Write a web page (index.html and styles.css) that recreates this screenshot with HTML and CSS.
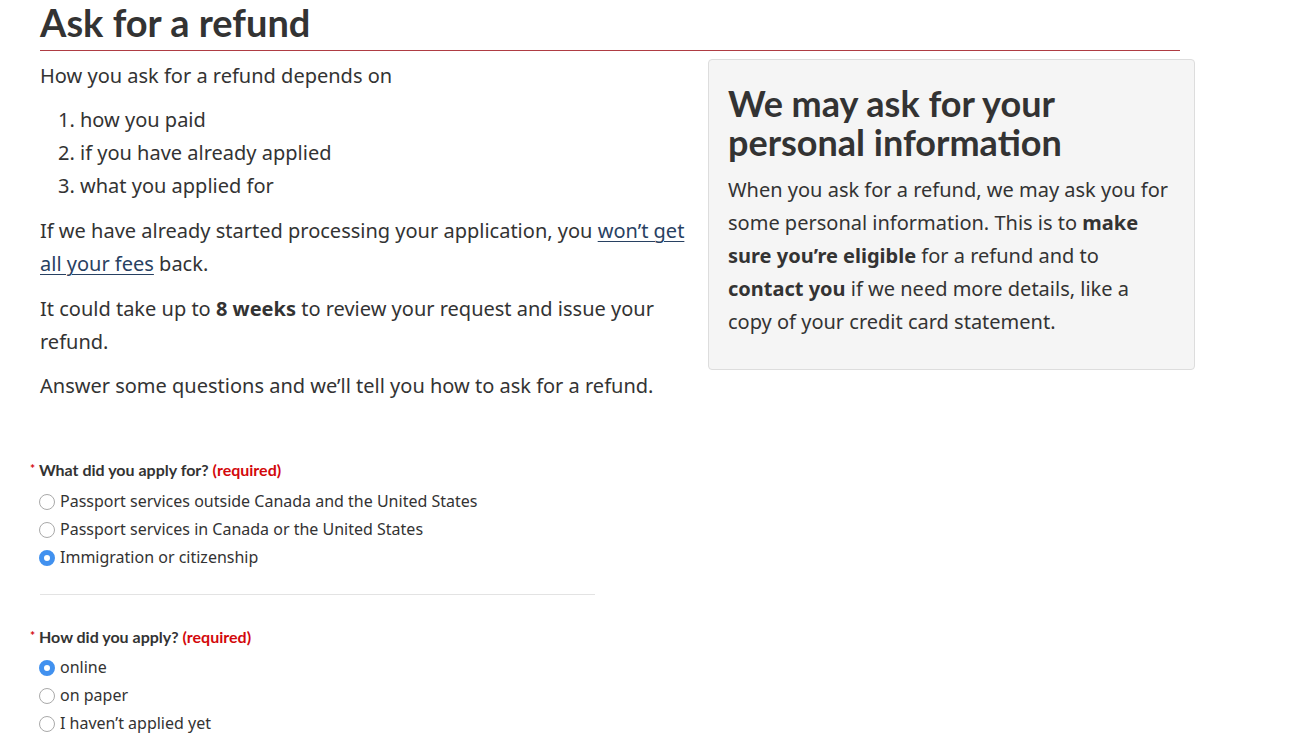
FILE: index.html
```html
<!DOCTYPE html>
<html lang="en">
<head>
<meta charset="utf-8">
<title>Ask for a refund</title>
<link rel="stylesheet" href="styles.css">
</head>
<body>
<main class="page">
  <h1 class="title">Ask for a refund</h1>
  <div class="row">
    <div class="intro">
      <p>How you ask for a refund depends on</p>
      <ol class="steps">
        <li>how you paid</li>
        <li>if you have already applied</li>
        <li>what you applied for</li>
      </ol>
      <p>If we have already started processing your application, you <a href="#">won’t get all your fees</a> back.</p>
      <p>It could take up to <strong>8 weeks</strong> to review your request and issue your refund.</p>
      <p>Answer some questions and we’ll tell you how to ask for a refund.</p>
    </div>
    <aside class="panel">
      <h2 class="panel-title">We may ask for your personal information</h2>
      <p>When you ask for a refund, we may ask you for some personal information. This is to <strong>make sure you’re eligible</strong> for a refund and to <strong>contact you</strong> if we need more details, like a copy of your credit card statement.</p>
    </aside>
  </div>
  <form class="questions">
    <fieldset class="field">
      <legend class="field-label"><span class="star">*</span> What did you apply for? <span class="req">(required)</span></legend>
      <label class="option"><input type="radio" name="what"> Passport services outside Canada and the United States</label>
      <label class="option"><input type="radio" name="what"> Passport services in Canada or the United States</label>
      <label class="option"><input type="radio" name="what" checked> Immigration or citizenship</label>
    </fieldset>
    <hr class="divider">
    <fieldset class="field field-second">
      <legend class="field-label"><span class="star">*</span> How did you apply? <span class="req">(required)</span></legend>
      <label class="option"><input type="radio" name="how" checked> online</label>
      <label class="option"><input type="radio" name="how"> on paper</label>
      <label class="option"><input type="radio" name="how"> I haven’t applied yet</label>
    </fieldset>
  </form>
</main>
</body>
</html>
```

FILE: styles.css
```css
html, body {
  margin: 0;
  padding: 0;
  background: #fff;
}

body {
  font-family: "Noto Sans", "DejaVu Sans", sans-serif;
  color: #333;
  font-size: 20px;
  line-height: 33px;
}

.page {
  padding: 0 40px;
}

.title {
  font-family: Lato, "Liberation Sans", sans-serif;
  font-weight: 700;
  font-size: 38px;
  line-height: 44px;
  margin: 0 0 8px 0;
  padding-bottom: 6px;
  width: 1140px;
  border-bottom: 1px solid #af3c43;
  color: #333;
}

.row {
  display: flex;
  align-items: flex-start;
  gap: 16px;
}

.intro {
  flex: 0 0 652px;
}

p {
  margin: 0 0 11.5px 0;
}

.steps {
  margin: -1px 0 12.5px 0;
  padding-left: 40px;
}

a {
  color: #284162;
  text-decoration: underline;
  text-underline-offset: 3px;
  text-decoration-thickness: 1px;
}

strong {
  font-weight: 700;
}

.panel {
  flex: 0 0 487px;
  box-sizing: border-box;
  background: #f5f5f5;
  border: 1px solid #ddd;
  border-radius: 4px;
  padding: 24px 19px 19px 19px;
}

.panel-title {
  font-family: Lato, "Liberation Sans", sans-serif;
  font-weight: 700;
  font-size: 36px;
  line-height: 39px;
  margin: 0 0 11px 0;
  color: #333;
}

.questions {
  margin-top: 43px;
}

.field {
  border: 0;
  margin: 0;
  padding: 0;
  display: flex;
  flex-direction: column;
}

.field-label {
  font-family: Lato, "Liberation Sans", sans-serif;
  font-weight: 700;
  font-size: 16px;
  line-height: 24px;
  padding: 0;
  margin-left: -10px;
  margin-bottom: 5px;
  color: #333;
}

.field-second .field-label {
  margin-bottom: 4px;
}

.star {
  color: #d3080c;
  font-size: 12px;
  vertical-align: 3px;
}

.req {
  color: #d3080c;
}

.option {
  display: flex;
  align-items: center;
  gap: 5px;
  font-size: 16px;
  line-height: 28px;
  margin-left: -1px;
  color: #333;
}

.option input {
  appearance: none;
  -webkit-appearance: none;
  margin: 2px 0 0 0;
  width: 16px;
  height: 16px;
  border-radius: 50%;
  border: 1px solid #a9a9a9;
  background: #fff;
  box-sizing: border-box;
  flex: 0 0 16px;
}

.option input:checked {
  border: 5px solid #4191ef;
  background: #fff;
}

.divider {
  width: 555px;
  margin: 23px 0 29px 0;
  border: 0;
  border-top: 1px solid #e3e3e3;
  height: 0;
}
```
